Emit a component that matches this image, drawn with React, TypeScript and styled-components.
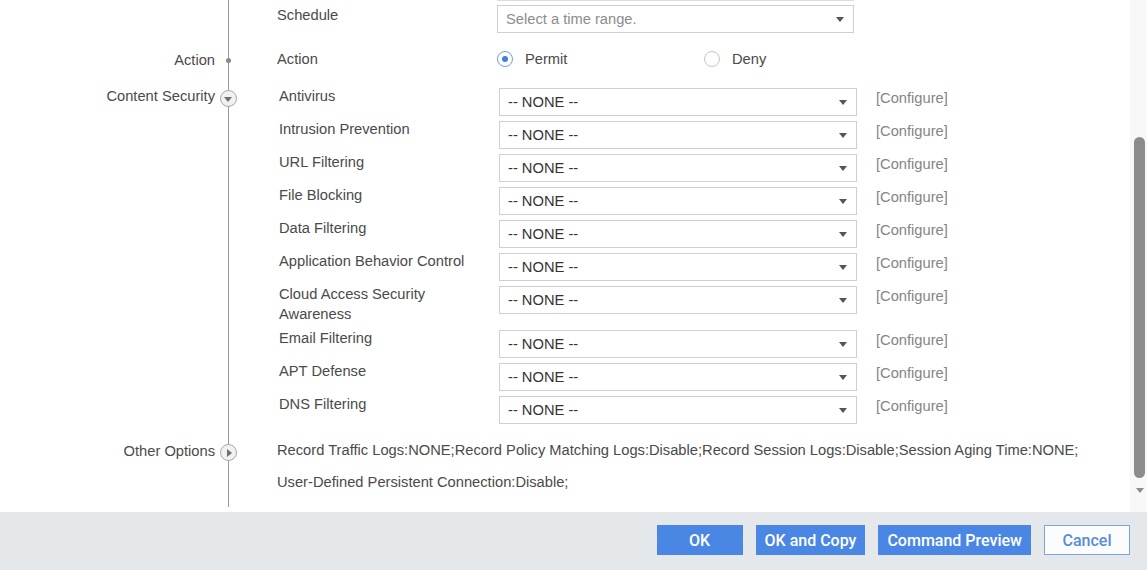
import styled, { createGlobalStyle } from 'styled-components';

const GlobalStyle = createGlobalStyle`
  html, body {
    margin: 0;
    padding: 0;
    background: #fff;
  }
  body {
    font-family: 'Liberation Sans', Arial, sans-serif;
    font-size: 14.7px;
    color: #4a4a4a;
  }
`;

const Page = styled.div`
  width: 1147px;
  height: 570px;
  display: flex;
  flex-direction: column;
  overflow: hidden;
`;

const Body = styled.div`
  height: 512px;
  display: flex;
  background: #fff;
`;

const Content = styled.div`
  flex: 1;
  display: flex;
  flex-direction: column;
`;

const Section = styled.div`
  display: grid;
  grid-template-columns: 216px 24px 1fr;
`;

const SideLabel = styled.div<{ $top: number }>`
  text-align: right;
  line-height: 20px;
  padding-top: ${(p) => p.$top}px;
  padding-right: 1px;
  color: #4a4a4a;
  white-space: nowrap;
`;

const Rail = styled.div`
  display: flex;
  flex-direction: column;
  align-items: center;
  background: linear-gradient(#9c9c9c, #9c9c9c) 12px 0 / 1px 100% no-repeat;
`;

const Dot = styled.span<{ $top: number }>`
  width: 5px;
  height: 5px;
  border-radius: 50%;
  background: #8a8a8a;
  margin-top: ${(p) => p.$top}px;
`;

const Toggle = styled.span<{ $top: number; $dir: 'down' | 'right' }>`
  width: 15px;
  height: 15px;
  border-radius: 50%;
  border: 1px solid #a5a5a5;
  background: #f1f1f1;
  margin-top: ${(p) => p.$top}px;
  display: flex;
  align-items: center;
  justify-content: center;

  &::after {
    content: '';
    width: 0;
    height: 0;
    ${(p) =>
      p.$dir === 'down'
        ? `border-left: 4px solid transparent;
           border-right: 4px solid transparent;
           border-top: 5px solid #707070;
           margin-top: 2px;`
        : `border-top: 4px solid transparent;
           border-bottom: 4px solid transparent;
           border-left: 5px solid #707070;
           margin-left: 2px;`}
  }
`;

const SectionBody = styled.div<{ $pt: number; $pb: number }>`
  padding-top: ${(p) => p.$pt}px;
  padding-bottom: ${(p) => p.$pb}px;
`;

const PrevEdge = styled.div`
  height: 1px;
  width: 357px;
  margin-left: 257px;
  margin-top: -5px;
  margin-bottom: 4px;
  background: #dcdcdc;
`;

const TopRow = styled.div<{ $h: number }>`
  display: grid;
  grid-template-columns: 220px 357px;
  padding-left: 37px;
  align-items: start;
  min-height: ${(p) => p.$h}px;
`;

const TopLabel = styled.div`
  line-height: 20px;
`;

const Select = styled.div<{ $placeholder?: boolean }>`
  box-sizing: border-box;
  height: 28px;
  border: 1px solid #cfcfcf;
  background: #fff;
  display: flex;
  align-items: center;
  justify-content: space-between;
  padding: 0 9px 0 8px;
  color: ${(p) => (p.$placeholder ? '#8c8c8c' : '#333')};

  &::after {
    content: '';
    width: 0;
    height: 0;
    border-left: 4.5px solid transparent;
    border-right: 4.5px solid transparent;
    border-top: 5px solid #555;
  }
`;

const RadioGroup = styled.div`
  display: flex;
  align-items: center;
  height: 20px;
`;

const RadioOption = styled.label`
  flex: 0 0 207px;
  display: flex;
  align-items: center;
  line-height: 20px;
`;

const RadioMark = styled.span<{ $checked?: boolean }>`
  box-sizing: border-box;
  width: 16px;
  height: 16px;
  border-radius: 50%;
  border: 1px solid ${(p) => (p.$checked ? '#6f9ee6' : '#c4c4c4')};
  display: flex;
  align-items: center;
  justify-content: center;
  margin-right: 12px;

  &::after {
    content: '';
    width: 6px;
    height: 6px;
    border-radius: 50%;
    background: ${(p) => (p.$checked ? '#3f7fe0' : 'transparent')};
  }
`;

const FieldRow = styled.div`
  display: grid;
  grid-template-columns: 220px 358px auto;
  align-items: start;
  min-height: 33px;
  padding-left: 39px;
`;

const FieldLabel = styled.div`
  line-height: 20px;
  padding-right: 20px;
  padding-bottom: 4px;
`;

const FieldSelect = styled(Select)`
  margin-top: 2px;
`;

const ConfigureLink = styled.a`
  line-height: 20px;
  padding-top: 2px;
  margin-left: 19px;
  color: #858585;
  cursor: pointer;
`;

const OptionsText = styled.div`
  line-height: 32px;
  padding-left: 37px;
  padding-right: 20px;
`;

const OptionItem = styled.span`
  display: inline-block;
`;

const Scrollbar = styled.div`
  width: 17px;
  background: #f8f8f8;
  display: flex;
  flex-direction: column;
  align-items: center;
  padding-top: 137px;
  box-sizing: border-box;
`;

const Thumb = styled.div`
  width: 11px;
  height: 341px;
  border-radius: 6px;
  background: #8c8c8c;
  margin-left: 2px;
`;

const ScrollArrow = styled.span`
  margin-top: 10px;
  margin-left: 2px;
  width: 0;
  height: 0;
  border-left: 4.5px solid transparent;
  border-right: 4.5px solid transparent;
  border-top: 5px solid #8c8c8c;
`;

const Footer = styled.div`
  height: 58px;
  background: #e5e8eb;
  display: flex;
  justify-content: flex-end;
  align-items: flex-start;
  gap: 13px;
  padding: 13px 17px 0 0;
  box-sizing: border-box;
`;

const Button = styled.button<{ $outline?: boolean }>`
  box-sizing: border-box;
  height: 30px;
  min-width: 86px;
  padding: 0 8px;
  font-family: Roboto, 'Liberation Sans', sans-serif;
  font-size: 16px;
  font-weight: 500;
  border: 1px solid ${(p) => (p.$outline ? '#7aa4e6' : '#4a87e4')};
  background: ${(p) => (p.$outline ? '#fbfcfe' : '#4a87e4')};
  color: ${(p) => (p.$outline ? '#5a8ad8' : '#fff')};
  cursor: pointer;
`;

const securityItems = [
  'Antivirus',
  'Intrusion Prevention',
  'URL Filtering',
  'File Blocking',
  'Data Filtering',
  'Application Behavior Control',
  'Cloud Access Security Awareness',
  'Email Filtering',
  'APT Defense',
  'DNS Filtering',
];

const otherOptions = [
  'Record Traffic Logs:NONE;',
  'Record Policy Matching Logs:Disable;',
  'Record Session Logs:Disable;',
  'Session Aging Time:NONE;',
  'User-Defined Persistent Connection:Disable;',
];

export default function App() {
  return (
    <Page>
      <GlobalStyle />
      <Body>
        <Content>
          <Section>
            <SideLabel $top={0} />
            <Rail />
            <SectionBody $pt={5} $pb={7}>
              <PrevEdge />
              <TopRow $h={28}>
                <TopLabel>Schedule</TopLabel>
                <Select $placeholder>Select a time range.</Select>
              </TopRow>
            </SectionBody>
          </Section>

          <Section>
            <SideLabel $top={10}>Action</SideLabel>
            <Rail>
              <Dot $top={18} />
            </Rail>
            <SectionBody $pt={9} $pb={9}>
              <TopRow $h={20}>
                <TopLabel>Action</TopLabel>
                <RadioGroup>
                  <RadioOption>
                    <RadioMark $checked />
                    Permit
                  </RadioOption>
                  <RadioOption>
                    <RadioMark />
                    Deny
                  </RadioOption>
                </RadioGroup>
              </TopRow>
            </SectionBody>
          </Section>

          <Section>
            <SideLabel $top={8}>Content Security</SideLabel>
            <Rail>
              <Toggle $top={12} $dir="down" />
            </Rail>
            <SectionBody $pt={8} $pb={7}>
              {securityItems.map((item) => (
                <FieldRow key={item}>
                  <FieldLabel>{item}</FieldLabel>
                  <FieldSelect>-- NONE --</FieldSelect>
                  <ConfigureLink>[Configure]</ConfigureLink>
                </FieldRow>
              ))}
            </SectionBody>
          </Section>

          <Section>
            <SideLabel $top={7}>Other Options</SideLabel>
            <Rail>
              <Toggle $top={10} $dir="right" />
            </Rail>
            <SectionBody $pt={0} $pb={9}>
              <OptionsText>
                {otherOptions.map((o) => (
                  <OptionItem key={o}>{o}</OptionItem>
                ))}
              </OptionsText>
            </SectionBody>
          </Section>
        </Content>
        <Scrollbar>
          <Thumb />
          <ScrollArrow />
        </Scrollbar>
      </Body>
      <Footer>
        <Button>OK</Button>
        <Button>OK and Copy</Button>
        <Button>Command Preview</Button>
        <Button $outline>Cancel</Button>
      </Footer>
    </Page>
  );
}
